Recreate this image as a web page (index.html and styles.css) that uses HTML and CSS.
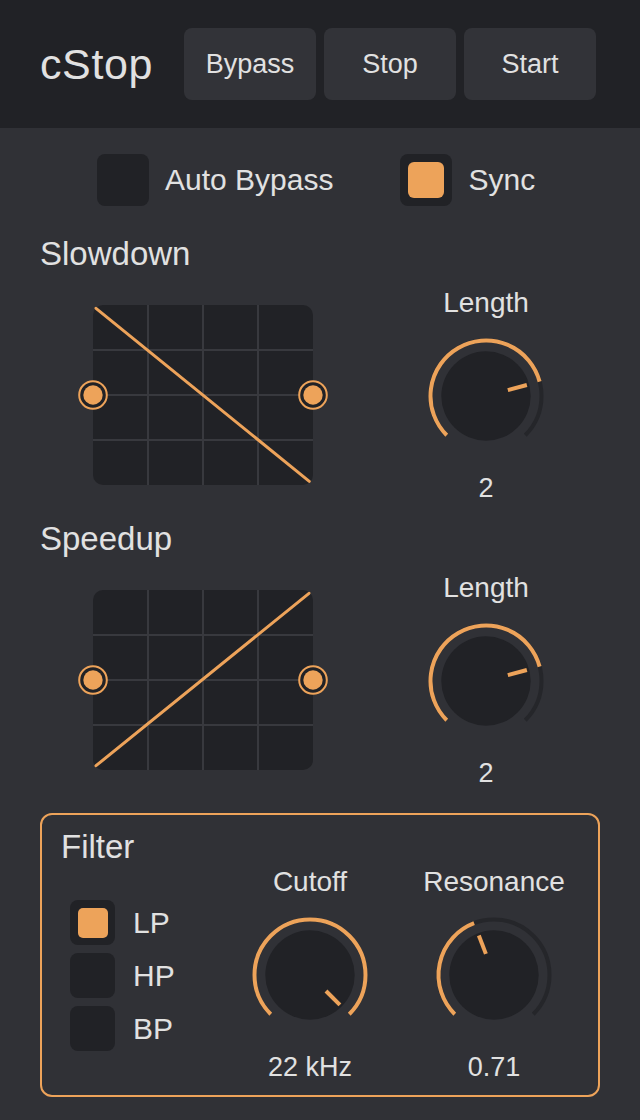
FILE: index.html
```html
<!DOCTYPE html>
<html lang="en">
<head>
<meta charset="utf-8">
<title>cStop</title>
<link rel="stylesheet" href="styles.css">
</head>
<body>
<header class="topbar">
  <div class="brand">cStop</div>
  <div class="actions">
    <button class="btn">Bypass</button>
    <button class="btn">Stop</button>
    <button class="btn">Start</button>
  </div>
</header>

<main class="panel">
  <div class="toggles">
    <label class="check">
      <span class="box"></span>
      <span class="check-label">Auto Bypass</span>
    </label>
    <label class="check">
      <span class="box on"><span class="dot"></span></span>
      <span class="check-label">Sync</span>
    </label>
  </div>

  <section class="section first">
    <h2 class="heading">Slowdown</h2>
    <div class="row">
      <svg class="curve" width="250" height="180" viewBox="0 0 250 180">
        <rect x="15" y="0" width="220" height="180" rx="10" class="curve-bg"/>
        <g class="grid">
          <line x1="70" y1="0" x2="70" y2="180"/>
          <line x1="125" y1="0" x2="125" y2="180"/>
          <line x1="180" y1="0" x2="180" y2="180"/>
          <line x1="15" y1="45" x2="235" y2="45"/>
          <line x1="15" y1="90" x2="235" y2="90"/>
          <line x1="15" y1="135" x2="235" y2="135"/>
        </g>
        <line class="curve-line" x1="18" y1="3.3" x2="231.3" y2="176.3"/>
        <circle class="handle-ring" cx="15" cy="90" r="13.8"/>
        <circle class="handle-dot" cx="15" cy="90" r="9.7"/>
        <circle class="handle-ring" cx="235" cy="90" r="13.8"/>
        <circle class="handle-dot" cx="235" cy="90" r="9.7"/>
      </svg>
      <div class="knob">
        <div class="knob-label">Length</div>
        <svg width="120" height="120" viewBox="0 0 120 120">
          <path class="track" d="M 20.76 99.24 A 55.5 55.5 0 1 1 99.24 99.24"/>
          <path class="value" d="M 20.76 99.24 A 55.5 55.5 0 1 1 113.61 45.64"/>
          <circle class="cap" cx="60" cy="60" r="44.7"/>
          <line class="pointer" x1="81.83" y1="54.15" x2="100.86" y2="49.05"/>
        </svg>
        <div class="knob-value">2</div>
      </div>
    </div>
  </section>

  <section class="section">
    <h2 class="heading">Speedup</h2>
    <div class="row">
      <svg class="curve" width="250" height="180" viewBox="0 0 250 180">
        <rect x="15" y="0" width="220" height="180" rx="10" class="curve-bg"/>
        <g class="grid">
          <line x1="70" y1="0" x2="70" y2="180"/>
          <line x1="125" y1="0" x2="125" y2="180"/>
          <line x1="180" y1="0" x2="180" y2="180"/>
          <line x1="15" y1="45" x2="235" y2="45"/>
          <line x1="15" y1="90" x2="235" y2="90"/>
          <line x1="15" y1="135" x2="235" y2="135"/>
        </g>
        <line class="curve-line" x1="18" y1="175.7" x2="231" y2="3.3"/>
        <circle class="handle-ring" cx="15" cy="90" r="13.8"/>
        <circle class="handle-dot" cx="15" cy="90" r="9.7"/>
        <circle class="handle-ring" cx="235" cy="90" r="13.8"/>
        <circle class="handle-dot" cx="235" cy="90" r="9.7"/>
      </svg>
      <div class="knob">
        <div class="knob-label">Length</div>
        <svg width="120" height="120" viewBox="0 0 120 120">
          <path class="track" d="M 20.76 99.24 A 55.5 55.5 0 1 1 99.24 99.24"/>
          <path class="value" d="M 20.76 99.24 A 55.5 55.5 0 1 1 113.61 45.64"/>
          <circle class="cap" cx="60" cy="60" r="44.7"/>
          <line class="pointer" x1="81.83" y1="54.15" x2="100.86" y2="49.05"/>
        </svg>
        <div class="knob-value">2</div>
      </div>
    </div>
  </section>

  <section class="filter">
    <div class="filter-left">
      <h2 class="heading">Filter</h2>
      <div class="modes">
        <label class="check small">
          <span class="box on"><span class="dot"></span></span>
          <span class="check-label">LP</span>
        </label>
        <label class="check small">
          <span class="box"></span>
          <span class="check-label">HP</span>
        </label>
        <label class="check small">
          <span class="box"></span>
          <span class="check-label">BP</span>
        </label>
      </div>
    </div>
    <div class="filter-knobs">
      <div class="knob">
        <div class="knob-label">Cutoff</div>
        <svg width="120" height="120" viewBox="0 0 120 120">
          <path class="track" d="M 20.76 99.24 A 55.5 55.5 0 1 1 99.24 99.24"/>
          <path class="value" d="M 20.76 99.24 A 55.5 55.5 0 1 1 99.24 99.24"/>
          <circle class="cap" cx="60" cy="60" r="44.7"/>
          <line class="pointer" x1="75.98" y1="75.98" x2="89.91" y2="89.91"/>
        </svg>
        <div class="knob-value">22 kHz</div>
      </div>
      <div class="knob">
        <div class="knob-label">Resonance</div>
        <svg width="120" height="120" viewBox="0 0 120 120">
          <path class="track" d="M 20.76 99.24 A 55.5 55.5 0 1 1 99.24 99.24"/>
          <path class="value" d="M 20.76 99.24 A 55.5 55.5 0 0 1 40.11 8.19"/>
          <circle class="cap" cx="60" cy="60" r="44.7"/>
          <line class="pointer" x1="51.9" y1="38.9" x2="44.84" y2="20.51"/>
        </svg>
        <div class="knob-value">0.71</div>
      </div>
    </div>
  </section>
</main>
</body>
</html>
```

FILE: styles.css
```css
* {
  box-sizing: border-box;
}

html, body {
  margin: 0;
  background: #303136;
}

body {
  font-family: "Liberation Sans", Arial, Helvetica, sans-serif;
  color: #e1e1e1;
  min-height: 1120px;
}

.topbar {
  display: flex;
  align-items: center;
  height: 128px;
  padding: 0 44px 0 40px;
  background: #212226;
}

.brand {
  font-size: 43px;
  line-height: 50px;
  letter-spacing: 0.6px;
}

.actions {
  margin-left: auto;
  display: flex;
  gap: 8px;
}

.btn {
  width: 132px;
  height: 72px;
  border: none;
  border-radius: 8px;
  background: #323338;
  color: #e1e1e1;
  font-family: inherit;
  font-size: 27px;
  padding: 0;
}

.panel {
  padding: 0 40px;
}

.toggles {
  display: flex;
  gap: 67px;
  margin-top: 26px;
  padding-left: 57px;
}

.check {
  display: flex;
  align-items: center;
  gap: 16px;
}

.box {
  width: 52px;
  height: 52px;
  border-radius: 8px;
  background: #212226;
  display: flex;
  align-items: center;
  justify-content: center;
}

.dot {
  width: 36px;
  height: 36px;
  border-radius: 6px;
  background: #eda35a;
}

.check-label {
  font-size: 30px;
  line-height: 52px;
}

.heading {
  margin: 0;
  font-weight: normal;
  font-size: 33px;
  line-height: 40px;
}

.section {
  margin-top: 15px;
}

.section.first {
  margin-top: 28px;
}

.row {
  margin-top: 12px;
  display: flex;
  align-items: center;
  justify-content: space-between;
  padding: 0 34px 0 38px;
}

.curve {
  display: block;
}

.curve-bg {
  fill: #212226;
}

.grid line {
  stroke: #38393e;
  stroke-width: 2;
}

.curve-line {
  stroke: #eda35a;
  stroke-width: 3;
  stroke-linecap: round;
}

.handle-ring {
  fill: #212226;
  stroke: #eda35a;
  stroke-width: 2;
}

.handle-dot {
  fill: #eda35a;
}

.knob {
  width: 160px;
  display: flex;
  flex-direction: column;
  align-items: center;
  gap: 16px;
}

.knob svg {
  display: block;
}

.knob-label {
  font-size: 28px;
  line-height: 34px;
}

.knob-value {
  font-size: 27px;
  line-height: 32px;
}

.track {
  fill: none;
  stroke: #25262a;
  stroke-width: 4;
}

.value {
  fill: none;
  stroke: #eda35a;
  stroke-width: 4;
}

.cap {
  fill: #212226;
}

.pointer {
  stroke: #eda35a;
  stroke-width: 4;
}

.filter {
  margin-top: 24px;
  border: 2px solid #eda35a;
  border-radius: 12px;
  padding: 12px 24px 12px 19px;
  display: flex;
}

.modes {
  margin-top: 33px;
  margin-left: 9px;
  display: flex;
  flex-direction: column;
  gap: 8px;
}

.check.small .box {
  width: 45px;
  height: 45px;
}

.check.small .dot {
  width: 30px;
  height: 30px;
  border-radius: 5px;
}

.check.small .check-label {
  line-height: 45px;
  margin-left: 2px;
}

.filter-knobs {
  margin-left: auto;
  margin-top: 38px;
  display: flex;
  gap: 24px;
}
```
